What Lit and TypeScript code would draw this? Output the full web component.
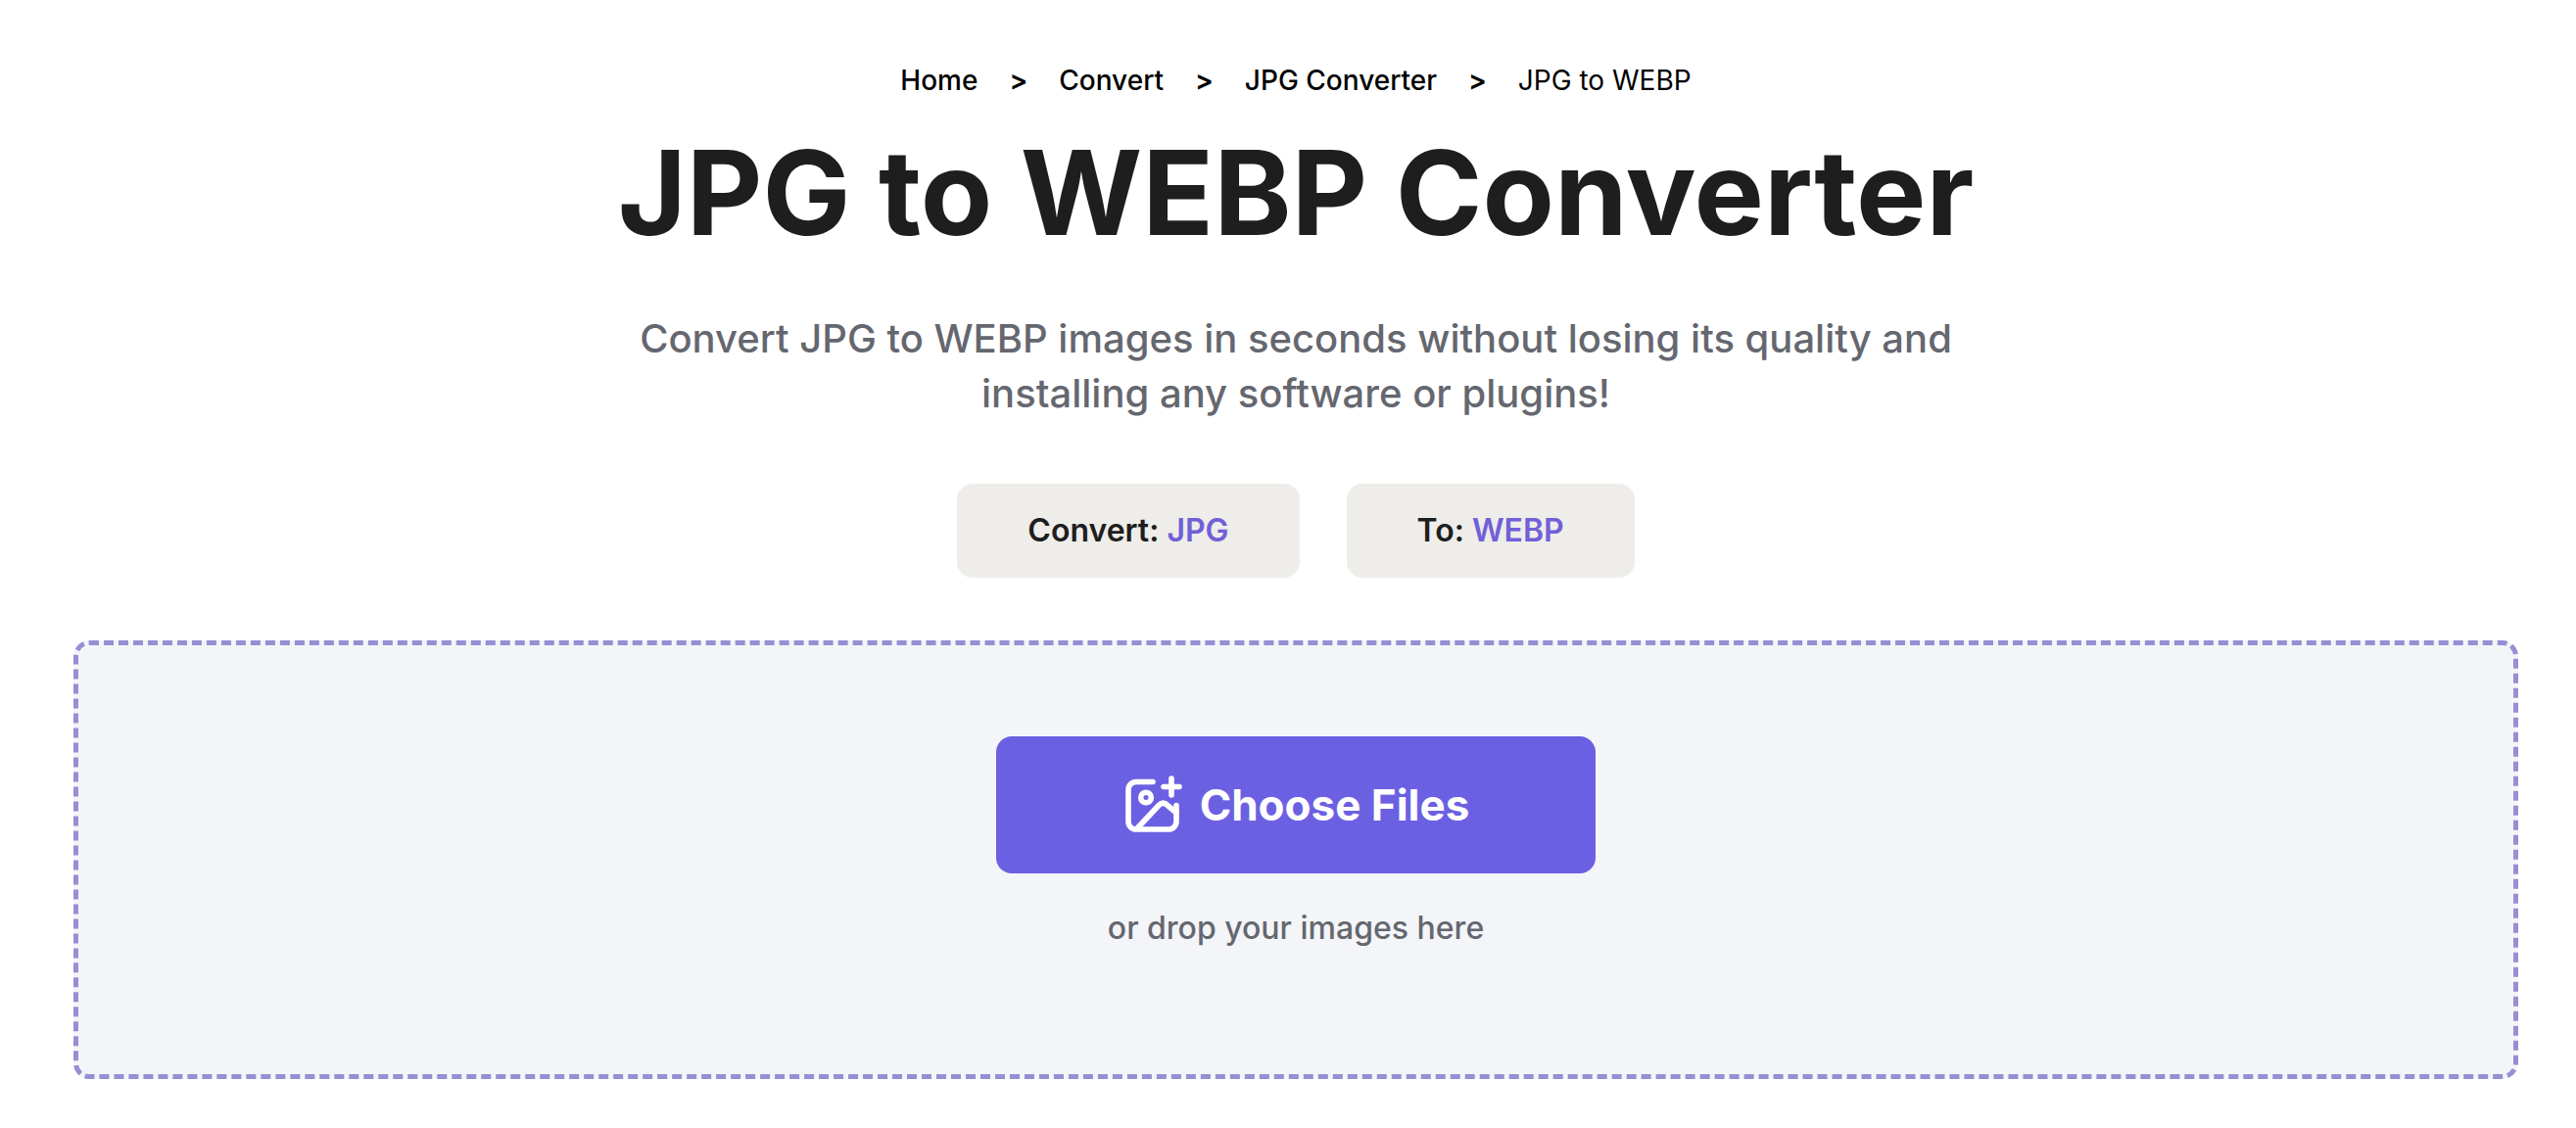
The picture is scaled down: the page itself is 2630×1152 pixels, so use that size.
import { LitElement, html, css, svg } from "lit";
import { customElement, property, query } from "lit/decorators.js";

interface Crumb {
  label: string;
  href?: string;
}

const imagePlusIcon = svg`
  <path d="M28 6.5H11a8 8 0 0 0-8 8V47a8 8 0 0 0 8 8h33a8 8 0 0 0 8-8V30.5" />
  <path d="M12.5 53.5 34 30.5q4.5-4.500 9 0L52 38" />
  <circle cx="21" cy="22.5" r="5.3" />
  <path d="M47 3v17M39 11.5h16" />
`;

@customElement("format-pill")
export class FormatPill extends LitElement {
  @property() label = "";
  @property() format = "";

  static styles = css`
    :host {
      display: block;
      padding: 24px 72px;
      border-radius: 16px;
      background: #eeede9;
      color: #1e1e1e;
      font-size: 32px;
      line-height: 48px;
      font-weight: 600;
    }
    .format {
      color: #7160d8;
    }
  `;

  render() {
    return html`${this.label}: <span class="format">${this.format}</span>`;
  }
}

@customElement("drop-zone")
export class DropZone extends LitElement {
  @query(".picker") private picker!: HTMLInputElement;

  static styles = css`
    :host {
      display: flex;
      flex-direction: column;
      align-items: center;
      gap: 36px;
      padding: 93px 24px 129px;
      border: 5px dashed #968fd4;
      border-radius: 16px;
      background: #f3f5f8;
    }
    .choose {
      display: flex;
      align-items: center;
      justify-content: center;
      gap: 16px;
      width: 612px;
      max-width: 100%;
      height: 140px;
      padding: 0;
      border: 0;
      border-radius: 16px;
      background: #6c60e2;
      color: #fff;
      font: inherit;
      font-size: 44px;
      font-weight: 700;
      cursor: pointer;
    }
    .icon {
      width: 63px;
      height: 60px;
      fill: none;
      stroke: currentColor;
      stroke-width: 5.6;
      stroke-linecap: round;
      stroke-linejoin: round;
    }
    .hint {
      margin: 0;
      color: #65676f;
      font-size: 32px;
      line-height: 40px;
      font-weight: 500;
    }
  `;

  render() {
    return html`
      <button class="choose" type="button" @click=${() => this.picker.click()}>
        <svg class="icon" viewBox="-3 0 63 60" aria-hidden="true">${imagePlusIcon}</svg>
        <span>Choose Files</span>
      </button>
      <input class="picker" type="file" accept="image/jpeg" aria-label="Choose Files" multiple hidden />
      <p class="hint">or drop your images here</p>
    `;
  }
}

@customElement("app-root")
export class AppRoot extends LitElement {
  private crumbs: Crumb[] = [
    { label: "Home", href: "#home" },
    { label: "Convert", href: "#convert" },
    { label: "JPG Converter", href: "#jpg-converter" },
    { label: "JPG to WEBP" },
  ];

  static styles = css`
    :host {
      display: block;
      min-height: 100vh;
      box-sizing: border-box;
      padding: 62px 59px 50px 75px;
      background: #fff;
      font-family: Inter, "Liberation Sans", sans-serif;
      text-align: center;
    }
    .crumbs {
      display: flex;
      justify-content: center;
      flex-wrap: wrap;
      gap: 32px;
      margin: 0 0 24px;
      padding: 0;
      list-style: none;
      color: #000;
      font-size: 28px;
      line-height: 40px;
    }
    .crumb {
      display: flex;
      gap: 32px;
    }
    .link {
      color: inherit;
      font-weight: 500;
      text-decoration: none;
    }
    .separator {
      font-weight: 600;
    }
    .title {
      margin: 0;
      color: #1e1e1e;
      font-size: 120px;
      line-height: 142px;
      font-weight: 700;
    }
    .lead {
      max-width: 1400px;
      margin: 50px auto 64px;
      color: #65676f;
      font-size: 40px;
      line-height: 56px;
      font-weight: 500;
    }
    .formats {
      display: flex;
      justify-content: center;
      gap: 48px;
      margin-bottom: 64px;
    }
  `;

  render() {
    return html`
      <nav aria-label="Breadcrumb">
        <ol class="crumbs">
          ${this.crumbs.map(
            (c) => html`<li class="crumb">
              ${c.href
                ? html`<a class="link" href=${c.href}>${c.label}</a><span class="separator">&gt;</span>`
                : html`<span>${c.label}</span>`}
            </li>`
          )}
        </ol>
      </nav>
      <h1 class="title">JPG to WEBP Converter</h1>
      <p class="lead">
        Convert JPG to WEBP images in seconds without losing its quality and installing any software or plugins!
      </p>
      <div class="formats">
        <format-pill label="Convert" format="JPG"></format-pill>
        <format-pill label="To" format="WEBP"></format-pill>
      </div>
      <drop-zone></drop-zone>
    `;
  }
}
